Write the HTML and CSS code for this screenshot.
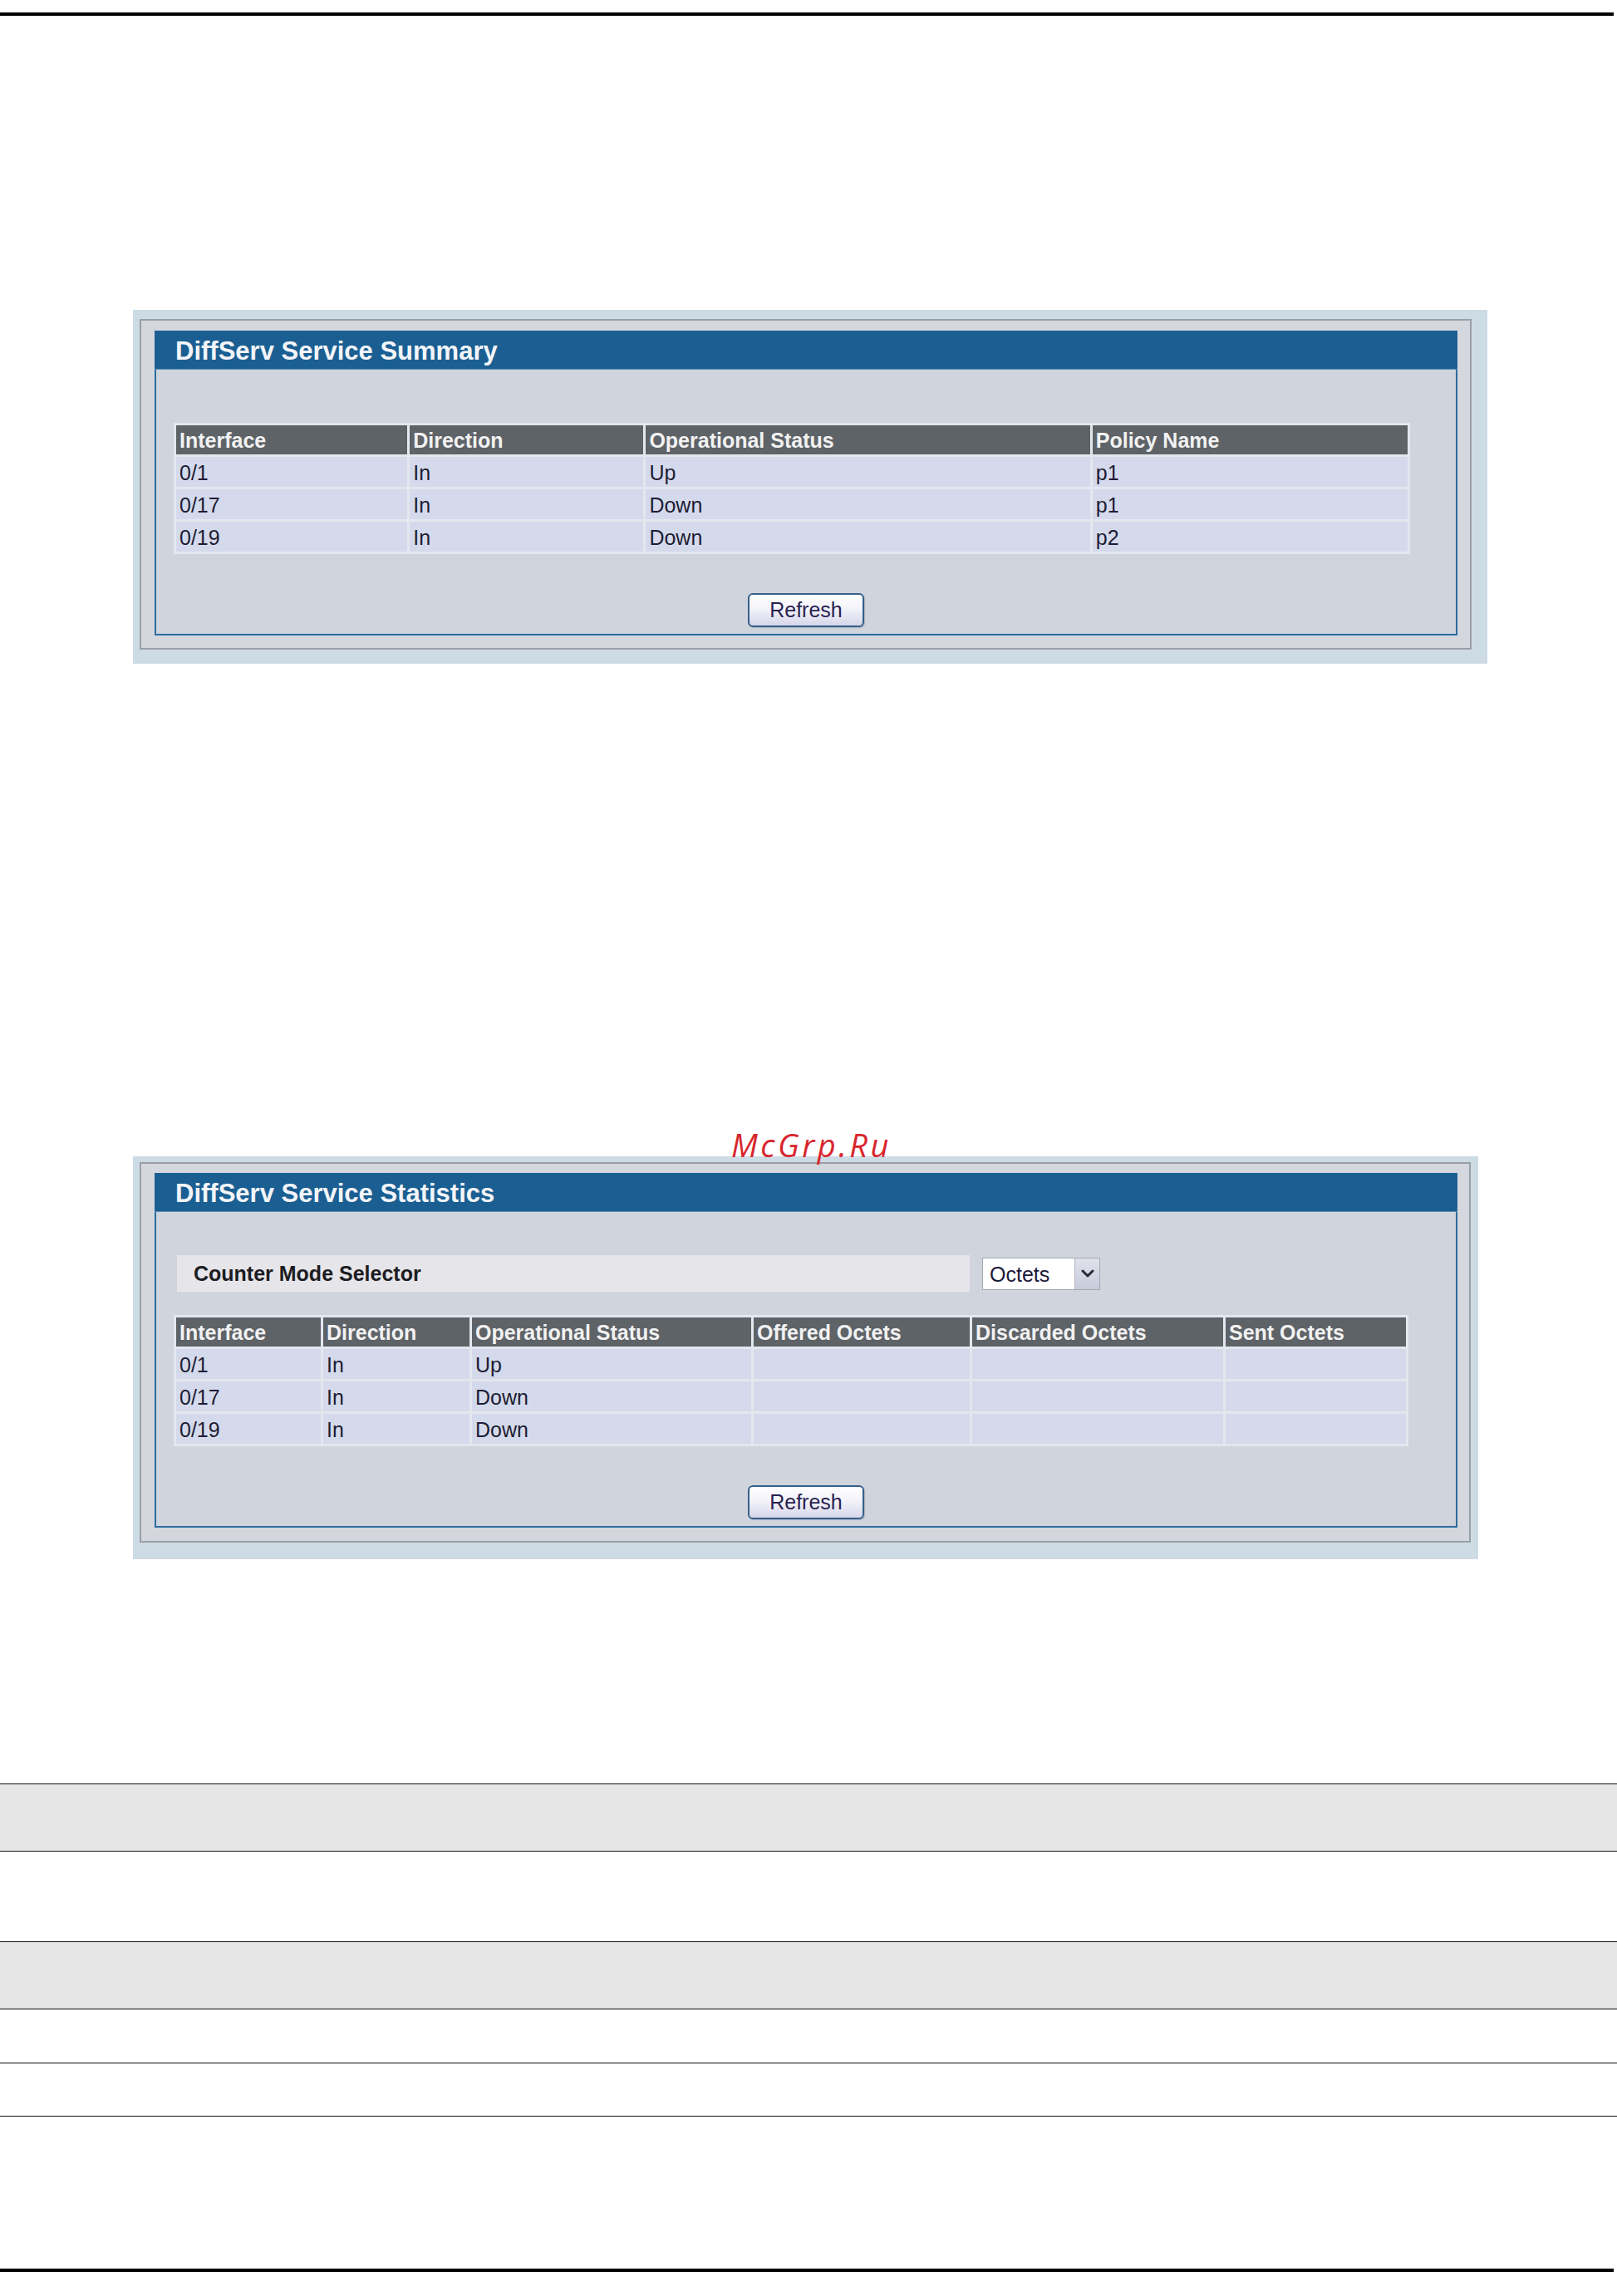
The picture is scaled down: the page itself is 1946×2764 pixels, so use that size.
FILE: index.html
```html
<!DOCTYPE html>
<html lang="en">
<head>
<meta charset="utf-8">
<title>DiffServ Service</title>
<link rel="stylesheet" href="styles.css">
</head>
<body>
<div class="page">
  <div class="rule-thick rule-top"></div>

  <section class="shot shot-summary">
    <div class="frame frame-summary">
      <div class="panel">
        <h2 class="panel-title">DiffServ Service Summary</h2>
        <div class="panel-body body-summary">
          <table class="grid grid-summary">
            <colgroup>
              <col class="c-278"><col class="c-281"><col class="c-534"><col class="c-379">
            </colgroup>
            <thead>
              <tr><th>Interface</th><th>Direction</th><th>Operational Status</th><th>Policy Name</th></tr>
            </thead>
            <tbody>
              <tr><td>0/1</td><td>In</td><td>Up</td><td>p1</td></tr>
              <tr><td>0/17</td><td>In</td><td>Down</td><td>p1</td></tr>
              <tr><td>0/19</td><td>In</td><td>Down</td><td>p2</td></tr>
            </tbody>
          </table>
          <div class="actions"><button class="btn" type="button">Refresh</button></div>
        </div>
      </div>
    </div>
  </section>

  <section class="shot shot-stats">
    <div class="watermark">McGrp.Ru</div>
    <div class="frame frame-stats">
      <div class="panel">
        <h2 class="panel-title">DiffServ Service Statistics</h2>
        <div class="panel-body body-stats">
          <div class="selector-row">
            <div class="selector-label">Counter Mode Selector</div>
            <div class="select">
              <span class="select-value">Octets</span>
              <span class="select-arrow">
                <svg width="16" height="10" viewBox="0 0 16 10"><path d="M2 2 L8 8 L14 2" fill="none" stroke="#2a2a34" stroke-width="3" stroke-linecap="round" stroke-linejoin="round"/></svg>
              </span>
            </div>
          </div>
          <table class="grid grid-stats">
            <colgroup>
              <col class="c-174"><col class="c-176"><col class="c-336"><col class="c-260"><col class="c-302"><col class="c-217">
            </colgroup>
            <thead>
              <tr><th>Interface</th><th>Direction</th><th>Operational Status</th><th>Offered Octets</th><th>Discarded Octets</th><th>Sent Octets</th></tr>
            </thead>
            <tbody>
              <tr><td>0/1</td><td>In</td><td>Up</td><td></td><td></td><td></td></tr>
              <tr><td>0/17</td><td>In</td><td>Down</td><td></td><td></td><td></td></tr>
              <tr><td>0/19</td><td>In</td><td>Down</td><td></td><td></td><td></td></tr>
            </tbody>
          </table>
          <div class="actions"><button class="btn" type="button">Refresh</button></div>
        </div>
      </div>
    </div>
  </section>

  <div class="doc-rows">
    <div class="doc-row row-gray row-first"></div>
    <div class="doc-row row-tall"></div>
    <div class="doc-row row-gray"></div>
    <div class="doc-row row-short"></div>
    <div class="doc-row row-short2"></div>
  </div>

  <div class="rule-thick rule-bottom"></div>
</div>
</body>
</html>
```

FILE: styles.css
```css
* { box-sizing: border-box; }

html, body {
  margin: 0;
  padding: 0;
  background: #ffffff;
}

body {
  font-family: "Liberation Sans", Arial, sans-serif;
  width: 1946px;
  min-height: 2764px;
}

.page {
  width: 1946px;
  padding-top: 15px;
}

.rule-thick {
  height: 4px;
  background: #000000;
  width: 1942px;
}

.rule-bottom { margin-top: 183px; }

/* screenshot blocks */
.shot {
  position: relative;
  margin-left: 160px;
  background: #cddbe5;
}

.shot-summary {
  margin-top: 354px;
  width: 1630px;
  padding: 11px 19px 17px 8px;
}

.shot-stats {
  margin-top: 593px;
  width: 1619px;
  padding: 7px 9px 20px 8px;
}

.frame {
  border: 2px solid #9a9ea5;
  background: #d4d7de;
}

.frame-summary { padding: 12px 15px 15px 16px; }
.frame-stats { padding: 11px 14px 16px 16px; }

.panel {
  border: 2px solid #2b6c9f;
  border-top: 0;
  background: #d0d4dc;
}

.panel-title {
  margin: 0 -2px;
  height: 47px;
  background: #1b5f92;
  color: #f3f5f9;
  font-size: 31px;
  font-weight: 700;
  line-height: 49px;
  padding-left: 25px;
  border-bottom: 1px solid #5c8ab0;
}

.panel-body {
  padding: 0 0 8px 21px;
}

.body-summary { padding-top: 64px; }
.body-stats { padding-top: 52px; }

/* tables */
.grid {
  border-collapse: separate;
  border-spacing: 3px;
  background: #e3e7ee;
  table-layout: fixed;
  font-size: 25px;
}

.grid-summary { width: 1488px; }
.grid-stats { width: 1486px; margin-top: 28px; }

.c-278 { width: 278px; }
.c-281 { width: 281px; }
.c-534 { width: 534px; }
.c-379 { width: 379px; }
.c-174 { width: 174px; }
.c-176 { width: 176px; }
.c-336 { width: 336px; }
.c-260 { width: 260px; }
.c-302 { width: 302px; }
.c-217 { width: 217px; }

.grid th {
  height: 35px;
  padding: 2px 0 0 4px;
  background: #5e6368;
  color: #f2f2f2;
  font-weight: 700;
  text-align: left;
  line-height: 33px;
  white-space: nowrap;
  overflow: hidden;
}

.grid td {
  height: 36px;
  padding: 2px 0 0 4px;
  background: #d4daeb;
  color: #1e1c34;
  line-height: 34px;
  white-space: nowrap;
}

/* counter mode selector */
.selector-row {
  display: flex;
  align-items: center;
  gap: 15px;
  margin-left: 4px;
}

.selector-label {
  width: 954px;
  height: 44px;
  background: #e6e5ea;
  font-size: 25px;
  font-weight: 700;
  color: #1c1c22;
  line-height: 44px;
  padding-left: 20px;
}

.select {
  display: flex;
  width: 142px;
  height: 39px;
  border: 1px solid #a6a9b0;
  background: #ffffff;
}

.select-value {
  flex: 1;
  font-size: 25px;
  color: #1c1a3c;
  line-height: 39px;
  padding-left: 8px;
}

.select-arrow {
  width: 30px;
  display: flex;
  align-items: center;
  justify-content: center;
  background: linear-gradient(#dfe1ec, #c8cbdb);
  border-left: 1px solid #b3b6c3;
}

/* button */
.actions {
  display: flex;
  justify-content: center;
  margin-top: 47px;
  padding-right: 21px;
}

.btn {
  width: 140px;
  height: 41px;
  border: 2px solid #34608b;
  border-radius: 6px;
  background: linear-gradient(#ffffff 0%, #f3f3fa 45%, #d6d6ea 100%);
  box-shadow: 1px 1px 1px rgba(120, 130, 150, 0.4);
  font-family: "Liberation Sans", Arial, sans-serif;
  font-size: 25px;
  color: #2a2250;
  padding: 0;
  line-height: 37px;
}

/* watermark */
.watermark {
  position: absolute;
  left: 720px;
  top: -33px;
  font-family: "Open Sans", "DejaVu Sans", sans-serif;
  font-style: italic;
  font-size: 38px;
  line-height: 1;
  letter-spacing: 3.5px;
  color: #d8252d;
  white-space: nowrap;
}

/* document rows at bottom */
.doc-rows {
  margin-top: 270px;
  border-top: 1px solid #111111;
}

.doc-row {
  border-bottom: 1px solid #111111;
}

.row-gray {
  height: 81px;
  background: #e6e6e6;
}

.row-tall { height: 109px; }
.row-short { height: 65px; }
.row-short2 { height: 64px; }
```
